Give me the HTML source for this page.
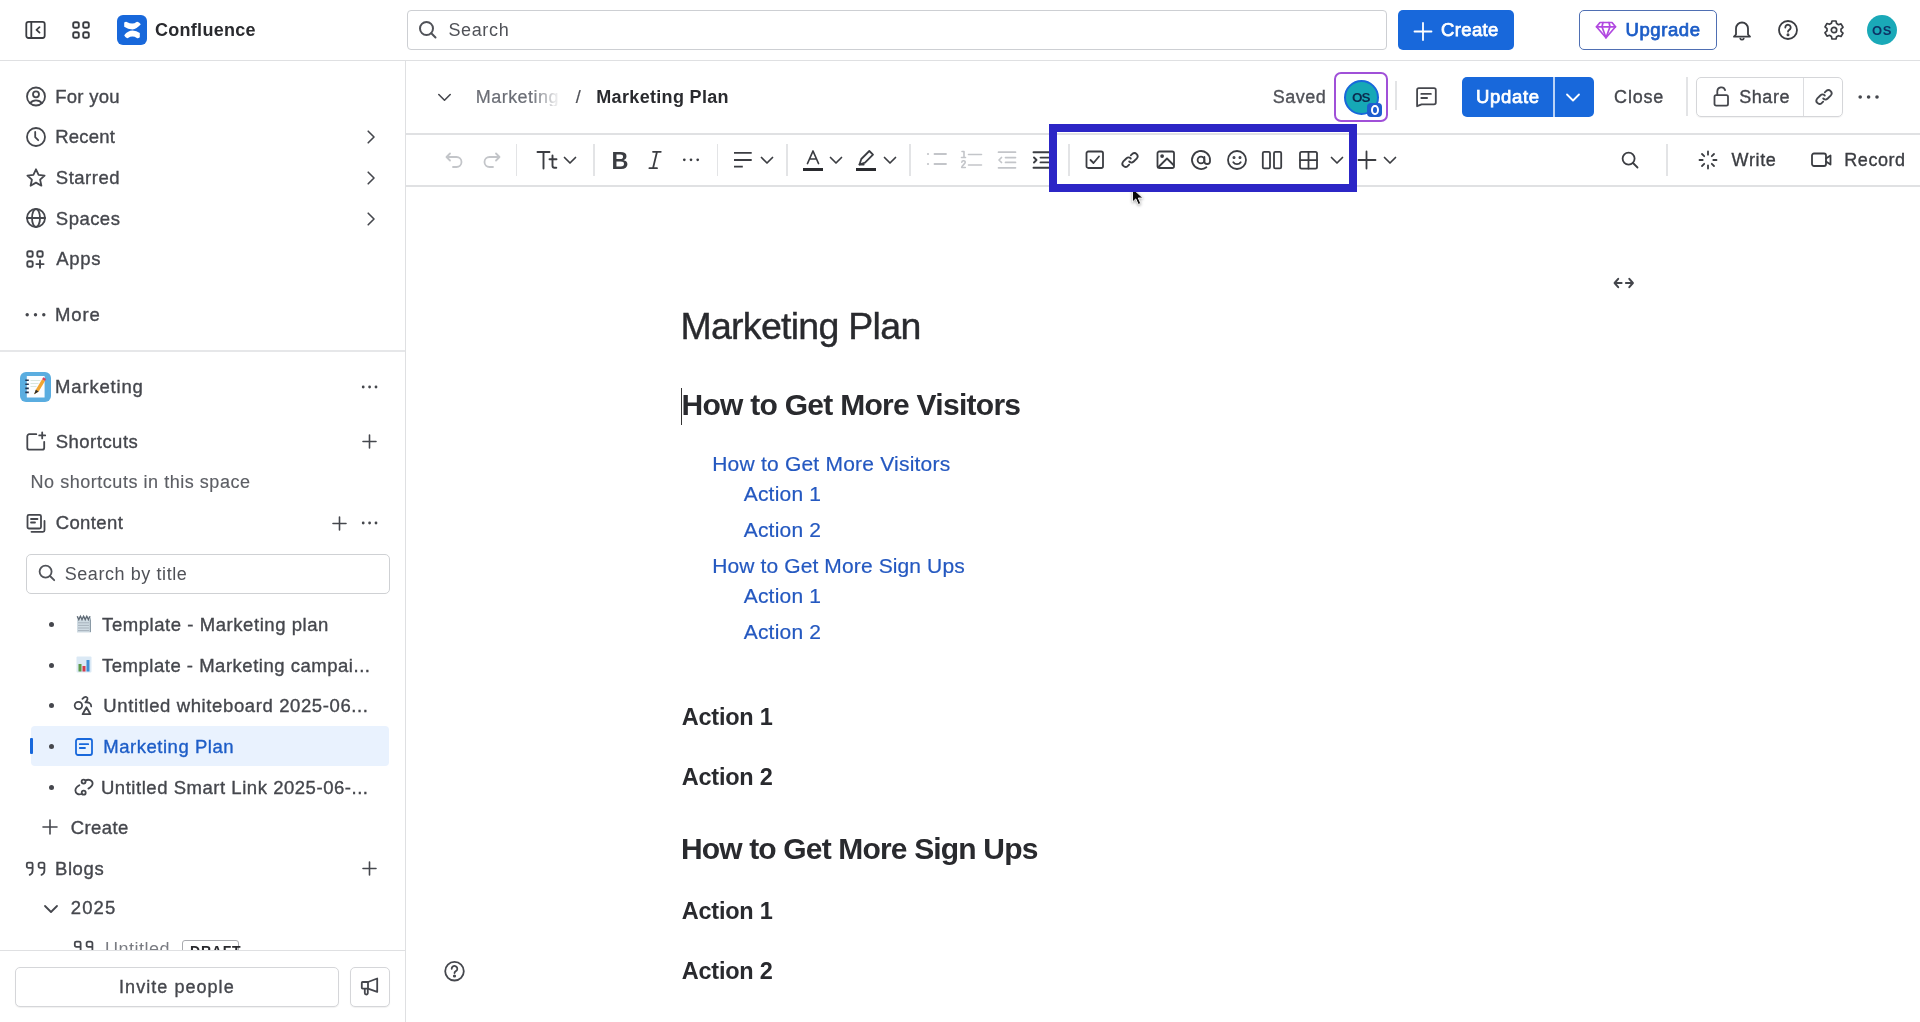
<!DOCTYPE html>
<html><head><meta charset="utf-8"><title>Confluence - Marketing Plan</title>
<style>
html,body{margin:0;padding:0;width:1920px;height:1022px;overflow:hidden;background:#fff;}
body{position:relative;font-family:"Liberation Sans",sans-serif;}
#root{position:absolute;left:0;top:0;width:1920px;height:1022px;overflow:hidden;will-change:transform;background:#fff;}
.a{position:absolute;}
.t{position:absolute;white-space:nowrap;}
svg.a{overflow:visible;}
</style></head><body><div id="root">

<div class="a" style="left:0px;top:60px;width:1920px;height:1px;background:#dfe0e2;"></div>
<svg class="a" style="left:24px;top:19px;" width="22" height="22" viewBox="0 0 22 22" fill="none" stroke="#3b3d42" stroke-width="1.8" stroke-linecap="round" stroke-linejoin="round"><rect x="2.3" y="2.8" width="18.4" height="16.2" rx="2.2"/><path d="M7.3 3v16"/><path d="M15.5 8.2l-3 2.7 3 2.7"/></svg>
<svg class="a" style="left:71px;top:20px;" width="20" height="20" viewBox="0 0 20 20" fill="none" stroke="#3b3d42" stroke-width="1.9" stroke-linecap="round" stroke-linejoin="round"><rect x="2.2" y="2.2" width="5.6" height="5.6" rx="1.8"/><rect x="12.2" y="2.2" width="5.6" height="5.6" rx="1.8"/><rect x="2.2" y="12.2" width="5.6" height="5.6" rx="1.8"/><rect x="12.2" y="12.2" width="5.6" height="5.6" rx="1.8"/></svg>
<svg class="a" style="left:117px;top:15px" width="30" height="30" viewBox="0 0 30 30"><rect width="30" height="30" rx="6" fill="#1868db"/><path d="M7.2 7.6Q8.6 6.4 9.8 6.9Q15.7 10 19.5 6.9Q21.6 6.2 23.8 9.3Q19.5 14.3 15.5 14.4Q11 14.4 7.2 11.8Z" fill="#fff"/><path d="M7.2 20.2Q11 15.6 15.6 15.6Q19.6 15.7 22.8 18V22.2Q21.2 23.6 19.8 23Q15.5 20.2 11 23Q8.8 23.8 7.2 20.2Z" fill="#fff"/></svg>
<div class="t " style="left:154.96px;top:20.76px;font-size:18px;line-height:18px;color:#292a2e;font-weight:700;letter-spacing:0.295px;">Confluence</div>
<div class="a" style="left:407px;top:10px;width:980px;height:40px;box-sizing:border-box;border:1px solid #cdcfd3;border-radius:4px;background:#fff;"></div>
<svg class="a" style="left:417px;top:19px;" width="22" height="22" viewBox="0 0 22 22" fill="none" stroke="#505258" stroke-width="2" stroke-linecap="round" stroke-linejoin="round"><circle cx="9.5" cy="9.5" r="6.5"/><path d="M14.3 14.3l4.2 4.2"/></svg>
<div class="t " style="left:448.38px;top:20.56px;font-size:18px;line-height:18px;color:#505258;letter-spacing:0.647px;">Search</div>
<div class="a" style="left:1398px;top:10px;width:116px;height:40px;background:#1868db;border-radius:5px;"></div>
<svg class="a" style="left:1413px;top:21px;" width="20" height="20" viewBox="0 0 20 20" fill="none" stroke="#fff" stroke-width="1.8" stroke-linecap="round" stroke-linejoin="round"><path d="M10 2v17M1.5 10.5h17"/></svg>
<div class="t " style="left:1441.06px;top:21.14px;font-size:18.5px;line-height:18.5px;color:#fff;letter-spacing:0.342px;-webkit-text-stroke:0.75px #fff;">Create</div>
<div class="a" style="left:1579px;top:10px;width:138px;height:40px;box-sizing:border-box;border:1.5px solid #4f6fb3;border-radius:5px;background:#fff;"></div>
<svg class="a" style="left:1595px;top:20px;" width="22" height="20" viewBox="0 0 22 20" fill="none" stroke="#b148e0" stroke-width="1.7" stroke-linecap="round" stroke-linejoin="round"><path d="M5 2.5h12l3.5 4.3L11 17.8 1.5 6.8z"/><path d="M1.5 6.8h19"/><path d="M8 2.5L7 6.8l4 11 4-11-1-4.3"/></svg>
<div class="t " style="left:1625.57px;top:20.94px;font-size:18.5px;line-height:18.5px;color:#1d5dc7;letter-spacing:0.567px;-webkit-text-stroke:0.75px #1d5dc7;">Upgrade</div>
<svg class="a" style="left:1732px;top:19px;" width="20" height="22" viewBox="0 0 20 22" fill="none" stroke="#3b3d42" stroke-width="1.8" stroke-linecap="round" stroke-linejoin="round"><path d="M4 15.5V9.5a6 6 0 0112 0v6l2 2.2H2z"/><path d="M8.3 19.6a1.9 1.9 0 003.4 0"/></svg>
<svg class="a" style="left:1777px;top:19px;" width="22" height="22" viewBox="0 0 22 22" fill="none" stroke="#3b3d42" stroke-width="1.8" stroke-linecap="round" stroke-linejoin="round"><circle cx="11" cy="11" r="9"/><path d="M8.3 8.5a2.7 2.7 0 115 1.4c-.7.9-2.3 1.4-2.3 2.8"/><circle cx="11" cy="15.8" r=".6" fill="#3b3d42"/></svg>
<svg class="a" style="left:1823px;top:19px;" width="22" height="22" viewBox="0 0 22 22" fill="none" stroke="#3b3d42" stroke-width="1.7" stroke-linecap="round" stroke-linejoin="round"><path d="M9 2h4l.6 2.6 1.9 1.1 2.5-.8 2 3.4-2 1.8v2.2l2 1.8-2 3.4-2.5-.8-1.9 1.1L13 20H9l-.6-2.6-1.9-1.1-2.5.8-2-3.4 2-1.8V9.7l-2-1.8 2-3.4 2.5.8 1.9-1.1z"/><circle cx="11" cy="11" r="2.7"/></svg>
<div class="a" style="left:1867px;top:15px;width:30px;height:30px;background:#1aa9b8;border-radius:50%;"></div>
<div class="t " style="left:1871.97px;top:23.50px;font-size:13px;line-height:13px;color:#0d3366;font-weight:700;letter-spacing:0.741px;">OS</div>
<div class="a" style="left:405px;top:61px;width:1px;height:961px;background:#dfe0e2;"></div>
<svg class="a" style="left:25px;top:86px;" width="22" height="22" viewBox="0 0 22 22" fill="none" stroke="#45474d" stroke-width="1.8" stroke-linecap="round" stroke-linejoin="round"><circle cx="11" cy="10.5" r="9"/><circle cx="11" cy="8.3" r="3"/><path d="M5.2 17.3c1.2-1.8 3.2-2.9 5.8-2.9s4.6 1.1 5.8 2.9"/></svg>
<div class="t " style="left:55.18px;top:87.94px;font-size:18.5px;line-height:18.5px;color:#45474d;letter-spacing:0.274px;-webkit-text-stroke:0.35px #45474d;">For you</div>
<svg class="a" style="left:25px;top:126px;" width="22" height="22" viewBox="0 0 22 22" fill="none" stroke="#45474d" stroke-width="1.8" stroke-linecap="round" stroke-linejoin="round"><circle cx="11" cy="11" r="9"/><path d="M10.2 6v5.2l3 3"/></svg>
<div class="t " style="left:55.18px;top:127.94px;font-size:18.5px;line-height:18.5px;color:#45474d;letter-spacing:0.211px;-webkit-text-stroke:0.35px #45474d;">Recent</div>
<svg class="a" style="left:25px;top:167px;" width="22" height="22" viewBox="0 0 22 22" fill="none" stroke="#45474d" stroke-width="1.8" stroke-linecap="round" stroke-linejoin="round"><path d="M11 2.3l2.6 5.6 6 .7-4.5 4.1 1.3 6-5.4-3.1-5.4 3.1 1.3-6L2.4 8.6l6-.7z"/></svg>
<div class="t " style="left:55.86px;top:168.74px;font-size:18.5px;line-height:18.5px;color:#45474d;letter-spacing:0.497px;-webkit-text-stroke:0.35px #45474d;">Starred</div>
<svg class="a" style="left:25px;top:207px;" width="22" height="22" viewBox="0 0 22 22" fill="none" stroke="#45474d" stroke-width="1.8" stroke-linecap="round" stroke-linejoin="round"><circle cx="11" cy="11" r="9"/><ellipse cx="11" cy="11" rx="4" ry="9"/><path d="M2 11h18"/></svg>
<div class="t " style="left:55.86px;top:209.64px;font-size:18.5px;line-height:18.5px;color:#45474d;letter-spacing:0.462px;-webkit-text-stroke:0.35px #45474d;">Spaces</div>
<svg class="a" style="left:25px;top:249px;" width="21" height="20" viewBox="0 0 21 20" fill="none" stroke="#45474d" stroke-width="1.9" stroke-linecap="round" stroke-linejoin="round"><rect x="2.3" y="2.3" width="5.4" height="5.4" rx="1.6"/><rect x="12.3" y="2.3" width="5.4" height="5.4" rx="1.6"/><rect x="2.3" y="12.3" width="5.4" height="5.4" rx="1.6"/><path d="M15 11.5v7.2M11.4 15.1h7.2"/></svg>
<div class="t " style="left:56.36px;top:249.74px;font-size:18.5px;line-height:18.5px;color:#45474d;letter-spacing:0.618px;-webkit-text-stroke:0.35px #45474d;">Apps</div>
<svg class="a" style="left:364px;top:129px;" width="14" height="16" viewBox="0 0 14 16" fill="none" stroke="#45474d" stroke-width="1.6" stroke-linecap="round" stroke-linejoin="round"><path d="M4.2 2.2l5.8 5.8-5.8 5.8"/></svg>
<svg class="a" style="left:364px;top:169.5px;" width="14" height="16" viewBox="0 0 14 16" fill="none" stroke="#45474d" stroke-width="1.6" stroke-linecap="round" stroke-linejoin="round"><path d="M4.2 2.2l5.8 5.8-5.8 5.8"/></svg>
<svg class="a" style="left:364px;top:210.5px;" width="14" height="16" viewBox="0 0 14 16" fill="none" stroke="#45474d" stroke-width="1.6" stroke-linecap="round" stroke-linejoin="round"><path d="M4.2 2.2l5.8 5.8-5.8 5.8"/></svg>
<svg class="a" style="left:24px;top:310px" width="24" height="10" viewBox="0 0 24 10"><circle cx="3.2" cy="4.8" r="1.7" fill="#45474d"/><circle cx="11.5" cy="4.8" r="1.7" fill="#45474d"/><circle cx="19.8" cy="4.8" r="1.7" fill="#45474d"/></svg>
<div class="t " style="left:54.88px;top:305.74px;font-size:18.5px;line-height:18.5px;color:#45474d;letter-spacing:0.930px;-webkit-text-stroke:0.35px #45474d;">More</div>
<div class="a" style="left:0px;top:350px;width:405px;height:2px;background:#e6e7e9;"></div>
<svg class="a" style="left:20px;top:372px" width="31" height="30" viewBox="0 0 31 30"><rect x="0" y="0" width="31" height="30" rx="6" fill="#5aade0"/><rect x="6.8" y="4" width="17.8" height="21.4" rx="0.5" fill="#fbfdff"/><path d="M5.3 8.3h3.5M5.3 12.3h3.5M5.3 16.4h3.5M5.3 20.4h3.5" stroke="#24344f" stroke-width="1.6"/><path d="M10.5 8.5h10M10.5 11.5h8M10.5 14.5h6" stroke="#cfe0d6" stroke-width="0.8"/><path d="M14.2 22.3l1.6-4.6 6.3-10.5 2.9 1.7-6.3 10.5z" fill="#f0a531"/><path d="M22.1 7.2l1.1-1.9 2.9 1.7-1.1 1.9z" fill="#d9405a"/><path d="M14.2 22.3l1.6-4.6 2.9 1.7z" fill="#2b2b2b"/></svg>
<div class="t " style="left:55.08px;top:378.34px;font-size:18.5px;line-height:18.5px;color:#45474d;letter-spacing:0.820px;-webkit-text-stroke:0.35px #45474d;">Marketing</div>
<svg class="a" style="left:361px;top:382px" width="18" height="10" viewBox="0 0 18 10"><circle cx="2.2" cy="5" r="1.4" fill="#45474d"/><circle cx="8.6" cy="5" r="1.4" fill="#45474d"/><circle cx="15" cy="5" r="1.4" fill="#45474d"/></svg>
<svg class="a" style="left:25px;top:431px;" width="22" height="22" viewBox="0 0 22 22" fill="none" stroke="#45474d" stroke-width="1.8" stroke-linecap="round" stroke-linejoin="round"><path d="M11.3 3.2H4.3a2 2 0 00-2 2v11.5a2 2 0 002 2h12.9a2 2 0 002-2V10.8"/><path d="M17.2 1.4v6M14.2 4.4h6"/></svg>
<div class="t " style="left:55.76px;top:432.94px;font-size:18.5px;line-height:18.5px;color:#45474d;letter-spacing:0.482px;-webkit-text-stroke:0.35px #45474d;">Shortcuts</div>
<svg class="a" style="left:362px;top:434px;" width="15" height="15" viewBox="0 0 15 15" fill="none" stroke="#45474d" stroke-width="1.6" stroke-linecap="round" stroke-linejoin="round"><path d="M7.5 1v13M1 7.5h13"/></svg>
<div class="t " style="left:30.52px;top:473.26px;font-size:18px;line-height:18px;color:#5d5f65;letter-spacing:0.535px;-webkit-text-stroke:0.15px #5d5f65;">No shortcuts in this space</div>
<svg class="a" style="left:25px;top:512px;" width="22" height="22" viewBox="0 0 22 22" fill="none" stroke="#45474d" stroke-width="1.8" stroke-linecap="round" stroke-linejoin="round"><path d="M4 2.8h10.5a1.5 1.5 0 011.5 1.5V15a1.5 1.5 0 01-1.5 1.5H4A1.5 1.5 0 012.5 15V4.3A1.5 1.5 0 014 2.8z"/><path d="M6 7h6.5M6 10.5h4"/><path d="M19.5 9v9.3a1.5 1.5 0 01-1.5 1.5H6.5"/></svg>
<div class="t " style="left:55.66px;top:513.94px;font-size:18.5px;line-height:18.5px;color:#45474d;letter-spacing:0.396px;-webkit-text-stroke:0.35px #45474d;">Content</div>
<svg class="a" style="left:332px;top:516px;" width="15" height="15" viewBox="0 0 15 15" fill="none" stroke="#45474d" stroke-width="1.6" stroke-linecap="round" stroke-linejoin="round"><path d="M7.5 1v13M1 7.5h13"/></svg>
<svg class="a" style="left:361px;top:518px" width="18" height="10" viewBox="0 0 18 10"><circle cx="2.2" cy="5" r="1.4" fill="#45474d"/><circle cx="8.6" cy="5" r="1.4" fill="#45474d"/><circle cx="15" cy="5" r="1.4" fill="#45474d"/></svg>
<div class="a" style="left:26px;top:554px;width:364px;height:40px;box-sizing:border-box;border:1px solid #cfd1d4;border-radius:5px;background:#fff;"></div>
<svg class="a" style="left:37px;top:563px;" width="20" height="20" viewBox="0 0 20 20" fill="none" stroke="#505258" stroke-width="1.8" stroke-linecap="round" stroke-linejoin="round"><circle cx="8.6" cy="8.6" r="6"/><path d="M13 13l4.2 4.2"/></svg>
<div class="t " style="left:64.68px;top:564.76px;font-size:18px;line-height:18px;color:#505258;letter-spacing:0.576px;">Search by title</div>
<div class="a" style="left:48.5px;top:622.2px;width:5px;height:5px;border-radius:50%;background:#45474d;"></div>
<svg class="a" style="left:72px;top:612px" width="24" height="24" viewBox="0 0 24 24"><rect x="5" y="4.5" width="14" height="16" fill="#cfdbe3"/><rect x="17.8" y="6" width="1.2" height="14" fill="#8a9aa6"/><path d="M5 4h13.5v3.5H5z" fill="#eef2f5"/><path d="M5.2 4.2l1.6 3.4 1.6-3.4 1.6 3.4 1.6-3.4 1.6 3.4 1.6-3.4 1.6 3.4 1.6-3.4" fill="none" stroke="#5f6a75" stroke-width="1.3"/><path d="M6 10.8h11M6 13.4h11M6 16h11M6 18.6h11" stroke="#a3aeb8" stroke-width="0.9"/></svg>
<div class="t " style="left:102.08px;top:615.94px;font-size:18.5px;line-height:18.5px;color:#45474d;letter-spacing:0.561px;-webkit-text-stroke:0.35px #45474d;">Template - Marketing plan</div>
<div class="a" style="left:48.5px;top:662.5px;width:5px;height:5px;border-radius:50%;background:#45474d;"></div>
<svg class="a" style="left:76px;top:656px" width="16" height="17" viewBox="0 0 16 17"><rect x="0.5" y="0.5" width="15" height="16" rx="1" fill="#dbe9f5"/><rect x="2.5" y="8" width="3" height="7.5" fill="#5c9a48"/><rect x="6.5" y="10" width="3" height="5.5" fill="#d33a4c"/><rect x="10.5" y="4" width="3" height="11.5" fill="#3f8fd6"/></svg>
<div class="t " style="left:101.98px;top:656.64px;font-size:18.5px;line-height:18.5px;color:#45474d;letter-spacing:0.519px;-webkit-text-stroke:0.35px #45474d;">Template - Marketing campai...</div>
<div class="a" style="left:48.5px;top:703.0px;width:5px;height:5px;border-radius:50%;background:#45474d;"></div>
<svg class="a" style="left:70px;top:693px;" width="26" height="26" viewBox="0 0 26 26" fill="none" stroke="#45474d" stroke-width="1.8" stroke-linecap="round" stroke-linejoin="round"><circle cx="8.4" cy="12.5" r="3.7"/><path d="M12.4 5.8c1.2-1.3 2.6-2.2 4-1.8 2 .7 1.2 3.4-1 5.4 2.8-.5 6 .6 5.8 4"/><path d="M16.5 14.2l3.9 7H12.6z"/></svg>
<div class="t " style="left:103.37px;top:697.34px;font-size:18.5px;line-height:18.5px;color:#45474d;letter-spacing:0.613px;-webkit-text-stroke:0.35px #45474d;">Untitled whiteboard 2025-06...</div>
<div class="a" style="left:31px;top:726px;width:358px;height:40px;background:#e9f2fe;border-radius:4px;"></div>
<div class="a" style="left:30px;top:738px;width:3px;height:16px;background:#1868db;border-radius:1px;"></div>
<div class="a" style="left:48.5px;top:743.5px;width:5px;height:5px;border-radius:50%;background:#45474d;"></div>
<svg class="a" style="left:74px;top:737px;" width="20" height="20" viewBox="0 0 20 20" fill="none" stroke="#1868db" stroke-width="1.8" stroke-linecap="round" stroke-linejoin="round"><rect x="2" y="2" width="16" height="16" rx="2"/><path d="M5.8 7.2h8.4M5.8 11h5.2"/></svg>
<div class="t " style="left:103.28px;top:738.04px;font-size:18.5px;line-height:18.5px;color:#1d5dc7;letter-spacing:0.525px;-webkit-text-stroke:0.35px #1d5dc7;">Marketing Plan</div>
<div class="a" style="left:48.5px;top:784.5px;width:5px;height:5px;border-radius:50%;background:#45474d;"></div>
<svg class="a" style="left:72px;top:775px;" width="24" height="24" viewBox="0 0 24 24" fill="none" stroke="#45474d" stroke-width="1.8" stroke-linecap="round" stroke-linejoin="round"><circle cx="11.6" cy="6.6" r="2"/><circle cx="11.7" cy="17.7" r="2"/><path d="M13.5 5.6C16.5 3.8 20.6 5.2 20.6 8.6c0 2-1.8 3.6-4.2 5"/><path d="M9.8 18.8C6.6 20.4 3.4 18.6 3.4 15.5c0-2 1.5-3.8 4-5.2"/></svg>
<div class="t " style="left:100.97px;top:778.74px;font-size:18.5px;line-height:18.5px;color:#45474d;letter-spacing:0.537px;-webkit-text-stroke:0.35px #45474d;">Untitled Smart Link 2025-06-...</div>
<svg class="a" style="left:42px;top:819px;" width="16" height="16" viewBox="0 0 16 16" fill="none" stroke="#45474d" stroke-width="1.6" stroke-linecap="round" stroke-linejoin="round"><path d="M8 1v14M1 8h14"/></svg>
<div class="t " style="left:70.66px;top:818.94px;font-size:18.5px;line-height:18.5px;color:#45474d;letter-spacing:0.442px;-webkit-text-stroke:0.35px #45474d;">Create</div>
<svg class="a" style="left:20px;top:855px;" width="30" height="27" viewBox="0 0 30 27" fill="none" stroke="#45474d" stroke-width="1.8" stroke-linecap="round" stroke-linejoin="round"><path d="M12.6 12.8H8.3a1.5 1.5 0 01-1.5-1.5V9.1a1.5 1.5 0 011.5-1.5h2.8a1.5 1.5 0 011.5 1.5v6.4c0 2.2-1.1 3.6-2.9 4.4"/><path d="M24.4 12.8h-4.3a1.5 1.5 0 01-1.5-1.5V9.1a1.5 1.5 0 011.5-1.5h2.8a1.5 1.5 0 011.5 1.5v6.4c0 2.2-1.1 3.6-2.9 4.4"/></svg>
<div class="t " style="left:54.98px;top:859.54px;font-size:18.5px;line-height:18.5px;color:#45474d;letter-spacing:0.597px;-webkit-text-stroke:0.35px #45474d;">Blogs</div>
<svg class="a" style="left:362px;top:861px;" width="15" height="15" viewBox="0 0 15 15" fill="none" stroke="#45474d" stroke-width="1.6" stroke-linecap="round" stroke-linejoin="round"><path d="M7.5 1v13M1 7.5h13"/></svg>
<svg class="a" style="left:43px;top:902px;" width="16" height="14" viewBox="0 0 16 14" fill="none" stroke="#45474d" stroke-width="1.8" stroke-linecap="round" stroke-linejoin="round"><path d="M2 4l6 6 6-6"/></svg>
<div class="t " style="left:70.67px;top:899.44px;font-size:18.5px;line-height:18.5px;color:#45474d;letter-spacing:1.186px;-webkit-text-stroke:0.35px #45474d;">2025</div>
<div class="a" style="left:0;top:930px;width:405px;height:20px;overflow:hidden;">
<svg class="a" style="left:68px;top:3.5px;" width="30" height="27" viewBox="0 0 30 27" fill="none" stroke="#45474d" stroke-width="1.8" stroke-linecap="round" stroke-linejoin="round"><path d="M12.6 12.8H8.3a1.5 1.5 0 01-1.5-1.5V9.1a1.5 1.5 0 011.5-1.5h2.8a1.5 1.5 0 011.5 1.5v6.4c0 2.2-1.1 3.6-2.9 4.4"/><path d="M24.4 12.8h-4.3a1.5 1.5 0 01-1.5-1.5V9.1a1.5 1.5 0 011.5-1.5h2.8a1.5 1.5 0 011.5 1.5v6.4c0 2.2-1.1 3.6-2.9 4.4"/></svg>
<div class="t" style="left:105px;top:10px;font-size:18px;line-height:18px;color:#7a7c82;letter-spacing:0.5px;">Untitled</div>
<div class="a" style="left:182px;top:10px;width:57px;height:22px;box-sizing:border-box;border:1px solid #a9abaf;border-radius:3px;"></div>
<div class="t" style="left:190px;top:14px;font-size:14px;line-height:14px;color:#292a2e;font-weight:700;letter-spacing:0.8px;">DRAFT</div>
</div>
<div class="a" style="left:0px;top:950px;width:405px;height:72px;background:#fff;"></div>
<div class="a" style="left:0px;top:950px;width:405px;height:1px;background:#dfe0e2;"></div>
<div class="a" style="left:15px;top:967px;width:324px;height:40px;box-sizing:border-box;border:1px solid #d5d6d9;border-radius:5px;background:#fff;box-shadow:0 1px 1px rgba(0,0,0,0.06);"></div>
<div class="t " style="left:119.04px;top:977.76px;font-size:18px;line-height:18px;color:#45474d;letter-spacing:1.047px;-webkit-text-stroke:0.35px #45474d;">Invite people</div>
<div class="a" style="left:350px;top:967px;width:40px;height:40px;box-sizing:border-box;border:1px solid #d5d6d9;border-radius:5px;background:#fff;box-shadow:0 1px 1px rgba(0,0,0,0.06);"></div>
<svg class="a" style="left:355px;top:972px;" width="30" height="30" viewBox="0 0 30 30" fill="none" stroke="#45474d" stroke-width="1.8" stroke-linecap="round" stroke-linejoin="round"><path d="M7.6 10H13v6.6H7.6a.8.8 0 01-.8-.8v-5a.8.8 0 01.8-.8z"/><path d="M13 10l9.2-3.5v13.4L13 16.6"/><path d="M9.8 16.8v4.2a1.5 1.5 0 003 0v-4.2"/></svg>
<div class="a" style="left:406px;top:133px;width:1514px;height:1.5px;background:#e0e1e3;"></div>
<div class="a" style="left:406px;top:185px;width:1514px;height:1.5px;background:#e0e1e3;"></div>
<svg class="a" style="left:437px;top:91px;" width="15" height="13" viewBox="0 0 15 13" fill="none" stroke="#45474d" stroke-width="1.6" stroke-linecap="round" stroke-linejoin="round"><path d="M1.8 3.5l5.7 5.7 5.7-5.7"/></svg>
<div class="t" style="left:475.8px;top:88.06px;font-size:18px;line-height:18px;letter-spacing:0.45px;-webkit-text-stroke:0.2px #6b6e76;color:#6b6e76;-webkit-mask-image:linear-gradient(90deg,#000 0,#000 55px,rgba(0,0,0,0) 85px);mask-image:linear-gradient(90deg,#000 0,#000 55px,rgba(0,0,0,0) 85px);">Marketing</div>
<div class="t " style="left:575.80px;top:88.06px;font-size:18px;line-height:18px;color:#505258;-webkit-text-stroke:0.2px #505258;">/</div>
<div class="t " style="left:596.30px;top:88.06px;font-size:18px;line-height:18px;color:#292a2e;font-weight:700;letter-spacing:0.328px;">Marketing Plan</div>
<div class="t " style="left:1272.68px;top:87.76px;font-size:18px;line-height:18px;color:#505258;letter-spacing:0.507px;-webkit-text-stroke:0.35px #505258;">Saved</div>
<div class="a" style="left:1334px;top:72px;width:54px;height:50px;box-sizing:border-box;border:2.5px solid #a050d8;border-radius:7px;"></div>
<div class="a" style="left:1344px;top:79.5px;width:35px;height:35px;box-sizing:border-box;background:#16a8b6;border:2.5px solid #1868db;border-radius:50%;"></div>
<div class="t " style="left:1351.95px;top:90.57px;font-size:13.5px;line-height:13.5px;color:#0b2c4f;font-weight:700;letter-spacing:-0.919px;">OS</div>
<div class="a" style="left:1367px;top:102.5px;width:15px;height:14px;background:#1d5ecf;border-radius:4px;"></div>
<div class="a" style="left:1371px;top:104.5px;width:7.5px;height:10px;box-sizing:border-box;border:2px solid #fff;border-radius:50%;"></div>
<div class="a" style="left:1395px;top:81px;width:2px;height:29px;background:#e3e4e6;"></div>
<svg class="a" style="left:1415px;top:86px;" width="22" height="23" viewBox="0 0 22 23" fill="none" stroke="#45474d" stroke-width="1.8" stroke-linecap="round" stroke-linejoin="round"><path d="M2.1 20.2V4a1.8 1.8 0 011.8-1.8h15.1A1.8 1.8 0 0120.8 4v12.5a1.8 1.8 0 01-1.8 1.8H6.6z"/><path d="M6.3 7.9h9.6M6.3 12h5.8"/></svg>
<div class="a" style="left:1462px;top:77px;width:132px;height:40px;background:#1868db;border-radius:5px;"></div>
<div class="a" style="left:1553px;top:77px;width:1.5px;height:40px;background:#b9d2f6;"></div>
<div class="t " style="left:1476.07px;top:88.44px;font-size:18.5px;line-height:18.5px;color:#fff;letter-spacing:0.680px;-webkit-text-stroke:0.75px #fff;">Update</div>
<svg class="a" style="left:1565px;top:92px;" width="16" height="12" viewBox="0 0 16 12" fill="none" stroke="#fff" stroke-width="1.8" stroke-linecap="round" stroke-linejoin="round"><path d="M2 2.5l6 6 6-6"/></svg>
<div class="t " style="left:1614.09px;top:88.26px;font-size:18px;line-height:18px;color:#45474d;letter-spacing:0.803px;-webkit-text-stroke:0.35px #45474d;">Close</div>
<div class="a" style="left:1686px;top:77px;width:2px;height:39px;background:#e3e4e6;"></div>
<div class="a" style="left:1696px;top:77px;width:147px;height:40px;box-sizing:border-box;border:1px solid #d5d6d9;border-radius:5px;box-shadow:0 1px 1px rgba(0,0,0,0.05);"></div>
<div class="a" style="left:1803px;top:78px;width:1px;height:38px;background:#dcdde0;"></div>
<svg class="a" style="left:1712px;top:85px;" width="19" height="24" viewBox="0 0 19 24" fill="none" stroke="#45474d" stroke-width="1.8" stroke-linecap="round" stroke-linejoin="round"><rect x="2.5" y="10.2" width="13.5" height="10.5" rx="1.6"/><path d="M5.3 10V6.3a4 4 0 017.8-1.2"/></svg>
<div class="t " style="left:1739.18px;top:88.26px;font-size:18px;line-height:18px;color:#45474d;letter-spacing:0.567px;-webkit-text-stroke:0.35px #45474d;">Share</div>
<svg class="a" style="left:1814px;top:87px;" width="20" height="20" viewBox="0 0 20 20" fill="none" stroke="#45474d" stroke-width="1.8" stroke-linecap="round" stroke-linejoin="round"><path d="M10.8 5.4l1.6-1.6a3.2 3.2 0 014.5 4.5l-3.2 3.2a3.2 3.2 0 01-4.5 0"/><path d="M9.2 14.6l-1.6 1.6a3.2 3.2 0 01-4.5-4.5l3.2-3.2a3.2 3.2 0 014.5 0"/></svg>
<svg class="a" style="left:1857px;top:92px" width="24" height="10" viewBox="0 0 24 10"><circle cx="3.2" cy="5" r="1.8" fill="#45474d"/><circle cx="11.6" cy="5" r="1.8" fill="#45474d"/><circle cx="20" cy="5" r="1.8" fill="#45474d"/></svg>
<svg class="a" style="left:444px;top:151px;" width="22" height="19" viewBox="0 0 22 19" fill="none" stroke="#c3c5c9" stroke-width="1.8" stroke-linecap="round" stroke-linejoin="round"><path d="M6 2.5L2.5 6 6 9.5"/><path d="M2.8 6h9.7a5 5 0 010 10H9"/></svg>
<svg class="a" style="left:480px;top:151px;" width="22" height="19" viewBox="0 0 22 19" fill="none" stroke="#c3c5c9" stroke-width="1.8" stroke-linecap="round" stroke-linejoin="round"><path d="M16 2.5L19.5 6 16 9.5"/><path d="M19.2 6H9.5a5 5 0 000 10H13"/></svg>
<div class="a" style="left:515.5px;top:144px;width:1.5px;height:32px;background:#e3e4e6;"></div>
<svg class="a" style="left:535px;top:149px;" width="24" height="22" viewBox="0 0 24 22" fill="none" stroke="#3b3d42" stroke-width="1.9" stroke-linecap="round" stroke-linejoin="round"><path d="M2.5 3h12M8.5 3v16.5"/><path d="M17.5 6.5v10.3a2 2 0 002 2h1.8M14.5 10.2h7"/></svg>
<svg class="a" style="left:563px;top:156px;" width="14" height="9" viewBox="0 0 14 9" fill="none" stroke="#3b3d42" stroke-width="1.7" stroke-linecap="round" stroke-linejoin="round"><path d="M1.5 1.5l5.5 5.5 5.5-5.5"/></svg>
<div class="a" style="left:593px;top:144px;width:1.5px;height:32px;background:#e3e4e6;"></div>
<div class="t" style="left:611.5px;top:148.5px;font-size:23.5px;line-height:25px;font-weight:700;color:#3b3d42;">B</div>
<svg class="a" style="left:647px;top:150px;" width="16" height="20" viewBox="0 0 16 20" fill="none" stroke="#3b3d42" stroke-width="1.8" stroke-linecap="round" stroke-linejoin="round"><path d="M6 1.8h7.8M2.4 18.2h7.6M10 1.8L6 18.2"/></svg>
<svg class="a" style="left:681px;top:155px" width="20" height="10" viewBox="0 0 20 10"><circle cx="3.3" cy="4.8" r="1.35" fill="#3b3d42"/><circle cx="10" cy="4.8" r="1.35" fill="#3b3d42"/><circle cx="16.7" cy="4.8" r="1.35" fill="#3b3d42"/></svg>
<div class="a" style="left:716.5px;top:144px;width:1.5px;height:32px;background:#e3e4e6;"></div>
<svg class="a" style="left:732px;top:150px;" width="22" height="20" viewBox="0 0 22 20" fill="none" stroke="#3b3d42" stroke-width="1.9" stroke-linecap="round" stroke-linejoin="round"><path d="M2 2.9h17.7M2 10h17.7M2 16.6h8.8" stroke-linecap="butt"/></svg>
<svg class="a" style="left:759.5px;top:156px;" width="14" height="9" viewBox="0 0 14 9" fill="none" stroke="#3b3d42" stroke-width="1.7" stroke-linecap="round" stroke-linejoin="round"><path d="M1.5 1.5l5.5 5.5 5.5-5.5"/></svg>
<div class="a" style="left:786px;top:144px;width:1.5px;height:32px;background:#e3e4e6;"></div>
<svg class="a" style="left:802px;top:149px;" width="22" height="22" viewBox="0 0 22 22" fill="none" stroke="#3b3d42" stroke-width="1.7" stroke-linecap="round" stroke-linejoin="round"><path d="M5.5 14.5L11 2l5.5 12.5M7.6 10h6.8"/></svg>
<div class="a" style="left:803px;top:168px;width:20px;height:3.2px;background:#292a2e;"></div>
<svg class="a" style="left:828.5px;top:156px;" width="14" height="9" viewBox="0 0 14 9" fill="none" stroke="#3b3d42" stroke-width="1.7" stroke-linecap="round" stroke-linejoin="round"><path d="M1.5 1.5l5.5 5.5 5.5-5.5"/></svg>
<svg class="a" style="left:855px;top:148px;" width="22" height="22" viewBox="0 0 22 22" fill="none" stroke="#3b3d42" stroke-width="1.8" stroke-linecap="round" stroke-linejoin="round"><path d="M4.5 16.5l1.8-5.5 8-8 3.7 3.7-8 8z"/><path d="M4.5 16.5h4.2"/></svg>
<div class="a" style="left:856px;top:168px;width:20px;height:3.2px;background:#292a2e;"></div>
<svg class="a" style="left:882.5px;top:156px;" width="14" height="9" viewBox="0 0 14 9" fill="none" stroke="#3b3d42" stroke-width="1.7" stroke-linecap="round" stroke-linejoin="round"><path d="M1.5 1.5l5.5 5.5 5.5-5.5"/></svg>
<div class="a" style="left:909px;top:144px;width:1.5px;height:32px;background:#e3e4e6;"></div>
<svg class="a" style="left:925px;top:151px" width="24" height="17" viewBox="0 0 24 17" fill="none" stroke="#c3c5c9" stroke-width="1.8" stroke-linecap="round"><circle cx="3" cy="3" r="1.1" fill="#c3c5c9" stroke="none"/><circle cx="3" cy="13" r="1.1" fill="#c3c5c9" stroke="none"/><path d="M9.5 3h11.5M9.5 13h11.5"/></svg>
<svg class="a" style="left:960px;top:150px" width="24" height="20" viewBox="0 0 24 20" fill="none" stroke="#c3c5c9" stroke-width="1.6" stroke-linecap="round" stroke-linejoin="round"><path d="M2 1.5h2v6M1.5 7.5h4"/><path d="M1.8 12.3a1.7 1.7 0 013.4.3c0 1-3.5 3-3.5 4.9h3.6"/><path d="M8.5 4.5h13M8.5 15h13"/></svg>
<svg class="a" style="left:996px;top:150px;" width="22" height="20" viewBox="0 0 22 20" fill="none" stroke="#c3c5c9" stroke-width="1.7" stroke-linecap="round" stroke-linejoin="round"><path d="M2.5 2.2h17M9.5 7.6h10M9.5 12.4h10M2.5 17.8h17M5.5 7.5L3 10l2.5 2.5"/></svg>
<svg class="a" style="left:1031px;top:150px;" width="22" height="20" viewBox="0 0 22 20" fill="none" stroke="#3b3d42" stroke-width="1.9" stroke-linecap="round" stroke-linejoin="round"><path d="M2.5 2.2h17M9.5 7.6h10M9.5 12.4h10M2.5 17.8h17M3 7.5L5.5 10 3 12.5"/></svg>
<div class="a" style="left:1068px;top:144px;width:1.5px;height:32px;background:#e3e4e6;"></div>
<svg class="a" style="left:1084px;top:149px;" width="22" height="22" viewBox="0 0 22 22" fill="none" stroke="#3b3d42" stroke-width="1.8" stroke-linecap="round" stroke-linejoin="round"><rect x="2.5" y="2.5" width="16.5" height="16.5" rx="1.8"/><path d="M6.5 11l3 3 5.5-6.5"/></svg>
<svg class="a" style="left:1120px;top:150px;" width="20" height="20" viewBox="0 0 20 20" fill="none" stroke="#3b3d42" stroke-width="1.8" stroke-linecap="round" stroke-linejoin="round"><path d="M10.8 5.4l1.6-1.6a3.2 3.2 0 014.5 4.5l-3.2 3.2a3.2 3.2 0 01-4.5 0"/><path d="M9.2 14.6l-1.6 1.6a3.2 3.2 0 01-4.5-4.5l3.2-3.2a3.2 3.2 0 014.5 0"/></svg>
<svg class="a" style="left:1155px;top:149px;" width="22" height="22" viewBox="0 0 22 22" fill="none" stroke="#3b3d42" stroke-width="1.8" stroke-linecap="round" stroke-linejoin="round"><rect x="2.5" y="2.5" width="16.5" height="16.5" rx="1.8"/><path d="M3 18.5l9-9 6.5 6.5"/><circle cx="7.1" cy="7.1" r="1" fill="#3b3d42"/></svg>
<svg class="a" style="left:1190px;top:149px;" width="22" height="22" viewBox="0 0 22 22" fill="none" stroke="#3b3d42" stroke-width="1.8" stroke-linecap="round" stroke-linejoin="round"><circle cx="11" cy="11" r="3.4"/><path d="M14.4 8v4.2a2.8 2.8 0 005.6 0V11a9 9 0 10-3.6 7.2"/></svg>
<svg class="a" style="left:1226px;top:149px;" width="22" height="22" viewBox="0 0 22 22" fill="none" stroke="#3b3d42" stroke-width="1.8" stroke-linecap="round" stroke-linejoin="round"><circle cx="11" cy="11" r="9"/><path d="M7.3 13.2a4.4 4.4 0 007.4 0"/><circle cx="8" cy="8.6" r=".6" fill="#3b3d42"/><circle cx="14" cy="8.6" r=".6" fill="#3b3d42"/></svg>
<svg class="a" style="left:1261px;top:150px;" width="23" height="20" viewBox="0 0 23 20" fill="none" stroke="#3b3d42" stroke-width="1.8" stroke-linecap="round" stroke-linejoin="round"><rect x="1.8" y="1.8" width="7.2" height="16.6" rx="1.4"/><rect x="13" y="1.8" width="7.2" height="16.6" rx="1.4"/></svg>
<svg class="a" style="left:1297.5px;top:150px;" width="21" height="20" viewBox="0 0 21 20" fill="none" stroke="#3b3d42" stroke-width="1.8" stroke-linecap="round" stroke-linejoin="round"><rect x="2" y="1.8" width="17" height="16.8" rx="1.6"/><path d="M10.5 2v16.5M2.2 10.2h16.6"/></svg>
<svg class="a" style="left:1329.5px;top:156px;" width="14" height="9" viewBox="0 0 14 9" fill="none" stroke="#3b3d42" stroke-width="1.7" stroke-linecap="round" stroke-linejoin="round"><path d="M1.5 1.5l5.5 5.5 5.5-5.5"/></svg>
<svg class="a" style="left:1357px;top:150px;" width="20" height="20" viewBox="0 0 20 20" fill="none" stroke="#3b3d42" stroke-width="1.8" stroke-linecap="round" stroke-linejoin="round"><path d="M9.5 1.5v17M1.5 10h17"/></svg>
<svg class="a" style="left:1382.5px;top:156px;" width="14" height="9" viewBox="0 0 14 9" fill="none" stroke="#3b3d42" stroke-width="1.7" stroke-linecap="round" stroke-linejoin="round"><path d="M1.5 1.5l5.5 5.5 5.5-5.5"/></svg>
<svg class="a" style="left:1131px;top:186.5px;filter:drop-shadow(0 1px 1.5px rgba(0,0,0,0.35))" width="14" height="20" viewBox="0 0 14 20"><path d="M1.5 1.5v13.5l3.3-3.1 2.5 5.6 2.4-1.1-2.4-5.4h4.6z" fill="#0a0a0a" stroke="#fff" stroke-width="0.9"/></svg>
<div class="a" style="left:1049px;top:124px;width:308px;height:68px;box-sizing:border-box;border:8px solid #2c26c6;"></div>
<svg class="a" style="left:1620px;top:150px;" width="21" height="21" viewBox="0 0 21 21" fill="none" stroke="#3b3d42" stroke-width="1.8" stroke-linecap="round" stroke-linejoin="round"><circle cx="8.6" cy="8.6" r="6"/><path d="M13 13l4.5 4.5"/></svg>
<div class="a" style="left:1666px;top:144px;width:1.5px;height:32px;background:#e3e4e6;"></div>
<svg class="a" style="left:1698px;top:150px;" width="20" height="20" viewBox="0 0 20 20" fill="none" stroke="#3b3d42" stroke-width="1.8" stroke-linecap="round" stroke-linejoin="round"><path d="M10 1.5v3.2M10 15.3v3.2M1.5 10h3.2M15.3 10h3.2M4 4l2.2 2.2M13.8 13.8L16 16M16 4l-2.2 2.2M6.2 13.8L4 16"/></svg>
<div class="t " style="left:1731.62px;top:150.56px;font-size:18px;line-height:18px;color:#3b3d42;letter-spacing:0.632px;-webkit-text-stroke:0.35px #3b3d42;">Write</div>
<svg class="a" style="left:1810px;top:151px;" width="23" height="17" viewBox="0 0 23 17" fill="none" stroke="#3b3d42" stroke-width="1.8" stroke-linecap="round" stroke-linejoin="round"><rect x="2" y="2.5" width="14" height="12.5" rx="2"/><path d="M16 7.5l4.5-3v9l-4.5-3"/></svg>
<div class="t " style="left:1844.32px;top:150.56px;font-size:18px;line-height:18px;color:#3b3d42;letter-spacing:0.557px;-webkit-text-stroke:0.35px #3b3d42;">Record</div>
<svg class="a" style="left:1613px;top:277px;" width="22" height="12" viewBox="0 0 22 12" fill="none" stroke="#44464c" stroke-width="2" stroke-linecap="round" stroke-linejoin="round"><path d="M5.2 1.8L1.6 6 5.2 10.2M1.6 6h7M16.3 1.8L19.9 6 16.3 10.2M19.9 6h-7"/></svg>
<div class="t " style="left:680.42px;top:307.96px;font-size:37.5px;line-height:37.5px;color:#292a2e;letter-spacing:-0.715px;-webkit-text-stroke:0.4px #292a2e;">Marketing Plan</div>
<div class="a" style="left:681px;top:388px;width:1px;height:37px;background:#333;"></div>
<div class="t " style="left:681.49px;top:390.41px;font-size:30px;line-height:30px;color:#292a2e;font-weight:700;letter-spacing:-0.722px;">How to Get More Visitors</div>
<div class="t " style="left:712.18px;top:453.22px;font-size:21px;line-height:21px;color:#2458c0;letter-spacing:0.217px;-webkit-text-stroke:0.2px #2458c0;">How to Get More Visitors</div>
<div class="t " style="left:743.71px;top:483.32px;font-size:21px;line-height:21px;color:#2458c0;letter-spacing:0.200px;-webkit-text-stroke:0.2px #2458c0;">Action 1</div>
<div class="t " style="left:743.71px;top:519.12px;font-size:21px;line-height:21px;color:#2458c0;letter-spacing:0.200px;-webkit-text-stroke:0.2px #2458c0;">Action 2</div>
<div class="t " style="left:712.18px;top:554.62px;font-size:21px;line-height:21px;color:#2458c0;letter-spacing:0.119px;-webkit-text-stroke:0.2px #2458c0;">How to Get More Sign Ups</div>
<div class="t " style="left:743.71px;top:584.82px;font-size:21px;line-height:21px;color:#2458c0;letter-spacing:0.200px;-webkit-text-stroke:0.2px #2458c0;">Action 1</div>
<div class="t " style="left:743.71px;top:620.52px;font-size:21px;line-height:21px;color:#2458c0;letter-spacing:0.200px;-webkit-text-stroke:0.2px #2458c0;">Action 2</div>
<div class="t " style="left:681.81px;top:705.91px;font-size:23.5px;line-height:23.5px;color:#292a2e;font-weight:700;letter-spacing:-0.250px;">Action 1</div>
<div class="t " style="left:681.81px;top:765.61px;font-size:23.5px;line-height:23.5px;color:#292a2e;font-weight:700;letter-spacing:-0.250px;">Action 2</div>
<div class="t " style="left:680.89px;top:833.90px;font-size:30px;line-height:30px;color:#292a2e;font-weight:700;letter-spacing:-0.835px;">How to Get More Sign Ups</div>
<div class="t " style="left:681.81px;top:899.91px;font-size:23.5px;line-height:23.5px;color:#292a2e;font-weight:700;letter-spacing:-0.250px;">Action 1</div>
<div class="t " style="left:681.81px;top:959.91px;font-size:23.5px;line-height:23.5px;color:#292a2e;font-weight:700;letter-spacing:-0.250px;">Action 2</div>
<svg class="a" style="left:443px;top:960px;" width="23" height="23" viewBox="0 0 23 23" fill="none" stroke="#45474d" stroke-width="1.8" stroke-linecap="round" stroke-linejoin="round"><circle cx="11.5" cy="11.2" r="9.3"/><path d="M8.7 8.8a2.8 2.8 0 115.2 1.4c-.7.9-2.4 1.3-2.4 2.9"/><circle cx="11.5" cy="16" r=".7" fill="#45474d"/></svg>
</div></body></html>
